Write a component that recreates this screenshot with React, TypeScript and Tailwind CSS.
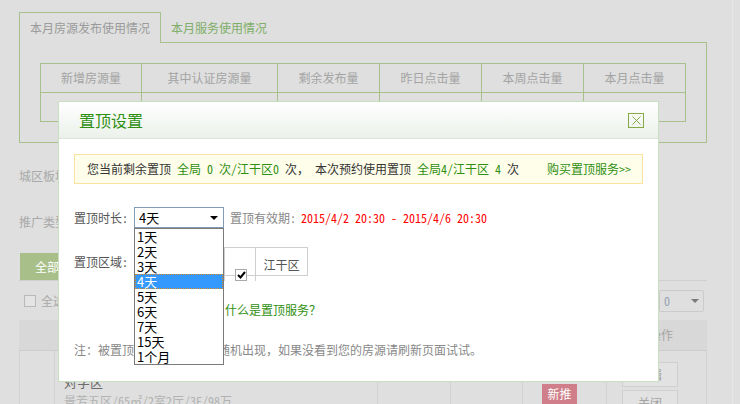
import React from 'react';

const song = "font-['Noto_Sans_Mono_CJK_SC','Noto_Sans_CJK_SC',sans-serif]";

const statCols = ['新增房源量', '其中认证房源量', '剩余发布量', '昨日点击量', '本周点击量', '本月点击量'];
const days = ['1天', '2天', '3天', '4天', '5天', '6天', '7天', '15天', '1个月'];

const CloseIcon = () => (
  <svg width="9" height="9" viewBox="0 0 9 9">
    <path d="M0.5 0.5 L8.5 8.5 M8.5 0.5 L0.5 8.5" stroke="#86a845" strokeWidth="1" />
  </svg>
);

const StatsBox = () => (
  <div>
    <div className="flex h-[31px] -mb-px relative">
      <div className="w-[142px] border-l border-t border-r border-[#a8c08b] bg-[#dedfde] flex items-center pl-[10px] text-[#9b9b9b]">
        本月房源发布使用情况
      </div>
      <div className="flex items-center pl-[10px] text-[#7fae68]">本月服务使用情况</div>
    </div>
    <div className="border border-[#a8c08b] px-[20px] py-[20px]">
      <div className="grid grid-cols-[101px_136px_102px_102px_102px_102px] border-l border-t border-[#a8c08b]">
        {statCols.map(c => (
          <div key={c} className="h-[29px] border-r border-b border-[#a8c08b] flex items-center justify-center text-[#a4a4a4]">
            {c}
          </div>
        ))}
        {statCols.map(c => (
          <div key={c + '-v'} className="h-[29px] border-r border-b border-[#a8c08b]" />
        ))}
      </div>
    </div>
  </div>
);

const PageBehind = () => (
  <div className="w-[688px]">
    <StatsBox />
    <div className="mt-[23px] h-[20px] leading-[20px] text-[#a9a9a9]">城区板块：</div>
    <div className="mt-[26px] h-[20px] leading-[20px] text-[#a9a9a9]">推广类型：</div>
    <div className="mt-[21px] border-b border-[#cfcfcf] flex">
      <div className="ml-px w-[60px] h-[27px] bg-[#a9bf89] text-white flex items-center pl-[15px]">全部</div>
    </div>
    <div className="mt-[9px] h-[22px] flex items-center justify-between">
      <div className="flex items-center pl-[5px] text-[#a9a9a9]">
        <span className="w-[12px] h-[12px] border border-[#b9b9b9] bg-[#e4e4e4]" />
        <span className="ml-[5px]">全选</span>
      </div>
      <div className="w-[45px] h-[22px] border border-[#cbcbcb] rounded-[2px] flex items-center justify-between px-[4px] mr-[3px] text-[#9aa0b5]">
        <span>0</span>
        <span className="w-0 h-0 border-l-[4px] border-r-[4px] border-t-[4px] border-l-transparent border-r-transparent border-t-[#7a7a7a]" />
      </div>
    </div>
    <div className="mt-[8px] h-[31px] bg-[#d8d8d8] border-b border-[#cdcdcd] flex items-center justify-end pr-[34px] text-[#a4a4a4]">
      操作
    </div>
    <div className="grid grid-cols-[36px_323px_73px_72px_84px_100px] h-[60px]">
      <div className="border-l border-r border-[#d2d2d2]" />
      <div className="border-r border-[#d2d2d2] pl-[9px] pt-[21px]">
        <div className="h-[20px] leading-[20px] text-[#6c6c6c] text-[13px]">对字区</div>
        <div className="h-[18px] leading-[18px] text-[#b2b2b2]">景芳五区/65㎡/2室2厅/3F/98万</div>
      </div>
      <div className="border-r border-[#d2d2d2]" />
      <div className="border-r border-[#d2d2d2]" />
      <div className="border-r border-[#d2d2d2] pl-[19px] pt-[33px]">
        <span className="inline-flex h-[20px] w-[35px] items-center justify-center bg-[#d07f8a] text-white">新推</span>
      </div>
      <div className="border-r border-[#d2d2d2] pl-[15px] pt-[11px] flex flex-col gap-[3px]">
        <span className="w-[56px] h-[25px] border border-[#cfcfcf] bg-[#e2e2e2] flex items-center justify-center text-[#a4a4a4]">编辑</span>
        <span className="w-[56px] h-[25px] border border-[#cfcfcf] bg-[#e2e2e2] flex items-center justify-center text-[#a4a4a4]">关闭</span>
      </div>
    </div>
  </div>
);

const TopDialog = () => (
  <div className="absolute left-[58px] top-[101px] w-[601px] h-[281px] bg-white border border-[#c9dfc1]">
    <div className="h-[37px] bg-gradient-to-b from-white to-[#ebf1ea] border-b border-[#dde3dc] flex items-center justify-between pl-[20px] pr-[14px]">
      <span className="text-[16px] text-[#2f8f12] font-['Noto_Sans_CJK_SC',sans-serif]">置顶设置</span>
      <span className="w-[16px] h-[15px] border border-[#86a845] flex items-center justify-center">
        <CloseIcon />
      </span>
    </div>
    <div className="px-[15px]">
      <div className="mt-[15px] h-[30px] bg-[#fffeea] border border-[#fbe2a0] flex items-center justify-between pl-[12px] pr-[11px] text-[#333]">
        <span>
          您当前剩余置顶 <span className="text-[#2f8f12]">全局 0 次/江干区0</span> 次， 本次预约使用置顶{' '}
          <span className="text-[#2f8f12]">全局4/江干区 4</span> 次
        </span>
        <span className="text-[#2f8f12]">购买置顶服务&gt;&gt;</span>
      </div>
      <div className="mt-[23px] h-[21px] flex items-center">
        <span className="w-[60px] text-[#555]">置顶时长:</span>
        <div className="w-[90px] h-[21px] border border-[#7f9db9] flex items-center justify-between pl-[4px] pr-[5px] text-black text-[13px] font-['Noto_Sans_CJK_SC',sans-serif]">
          <span>4天</span>
          <span className="w-0 h-0 border-l-[4px] border-r-[4px] border-t-[4px] border-l-transparent border-r-transparent border-t-black" />
        </div>
        <span className="ml-[6px] text-[#888]">置顶有效期:</span>
        <span className="ml-[5px] text-[#f00]">2015/4/2 20:30 - 2015/4/6 20:30</span>
      </div>
      <div className="mt-[19px] flex items-center">
        <span className="w-[60px] text-[#555]">置顶区域:</span>
        <div className="grid grid-cols-[90px_31px_51px] h-[29px] border border-[#cfcfcf]">
          <div className="border-r border-[#cfcfcf]" />
          <div className="border-r border-[#cfcfcf] pl-[10px] pt-[21px]">
            <span className="w-[12px] h-[12px] border border-[#aaa] bg-white flex items-center justify-center">
              <svg width="9" height="8" viewBox="0 0 9 8">
                <path d="M1 4 L3.5 6.5 L8 1" stroke="#000" strokeWidth="2" fill="none" />
              </svg>
            </span>
          </div>
          <div className="flex items-center justify-center text-[#555]">江干区</div>
        </div>
      </div>
      <div className="mt-[24px] h-[20px] leading-[20px] pl-[151px] text-[#2f8f12]">什么是置顶服务？</div>
      <div className="mt-[20px] h-[20px] leading-[20px] text-[#888]">
        注：被置顶的房源在列表中随机出现，如果没看到您的房源请刷新页面试试。
      </div>
    </div>
    <ul className="absolute left-[75px] top-[126px] w-[90px] border border-[#7a7a7a] bg-white py-0 text-[13px] text-black font-['Noto_Sans_CJK_SC',sans-serif]">
      {days.map(d => (
        <li
          key={d}
          className={`h-[15px] leading-[15px] pl-[2px] ${
            d === '4天' ? 'bg-[#3399ff] text-white outline-1 outline-dotted outline-[#d58a2c] -outline-offset-1' : ''
          }`}
        >
          {d}
        </li>
      ))}
    </ul>
  </div>
);

export default function App() {
  return (
    <div className={`relative w-[740px] h-[404px] overflow-hidden bg-[#dedfde] text-[12px] ${song}`}>
      <div className="w-[733px] h-[404px] border-r border-[#e7e7e7] pl-[19px] pt-[12px]">
        <PageBehind />
      </div>
      <TopDialog />
    </div>
  );
}
